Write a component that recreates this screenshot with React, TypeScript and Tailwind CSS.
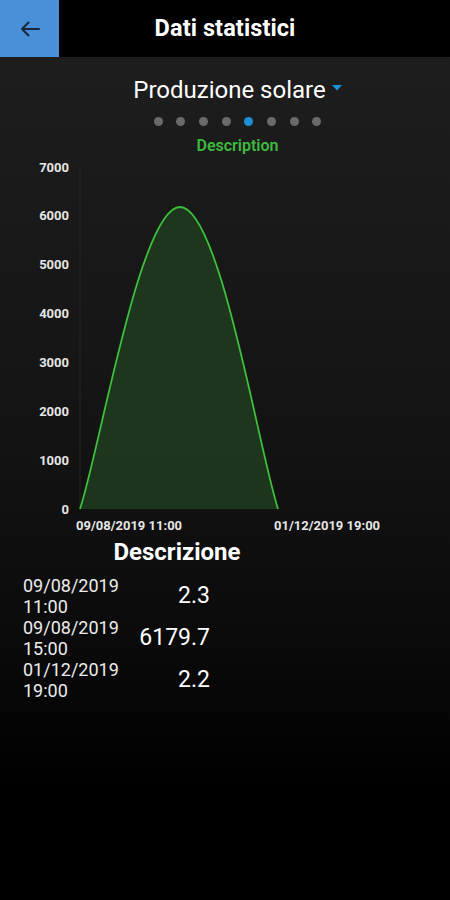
import React from "react";

const yTicks = [7000, 6000, 5000, 4000, 3000, 2000, 1000, 0];
const yOf = (v: number) => 353 - v * 0.048857;

const rows = [
  { d: "09/08/2019", t: "11:00", v: "2.3" },
  { d: "09/08/2019", t: "15:00", v: "6179.7" },
  { d: "01/12/2019", t: "19:00", v: "2.2" },
];

export default function App() {
  return (
    <div
      className="w-[450px] h-[900px] flex flex-col overflow-hidden text-white bg-[linear-gradient(to_bottom,#1f1f1f_0%,#131313_50%,#0a0a0a_72%,#000_87%)]"
      style={{ fontFamily: "Roboto, 'Noto Sans', sans-serif" }}
    >
      <div className="h-[57px] flex bg-black shrink-0">
        <div className="w-[59px] h-[57px] bg-[#4a90d9] flex items-center justify-center">
          <svg width="20" height="16" viewBox="0 0 20 16" fill="none">
            <path d="M19 8H2M8.5 1.5L2 8l6.5 6.5" stroke="#15263a" strokeWidth="2" strokeLinecap="round" strokeLinejoin="round" />
          </svg>
        </div>
        <div className="flex-1 flex items-center justify-center text-[23.5px] font-bold leading-none tracking-[0.1px]">
          Dati statistici
        </div>
        <div className="w-[59px]" />
      </div>

      <div className="pl-[25px] pt-[18px] flex flex-col items-center">
        <div className="flex items-center h-[30px]">
          <span className="text-[24px] leading-[30px]">Produzione solare</span>
          <svg width="10" height="6" viewBox="0 0 10 6" className="ml-[6px] mb-[4px]">
            <path d="M0 0h10L5 5.5z" fill="#1e90d6" />
          </svg>
        </div>
        <div className="mt-[12px] h-[9px] flex gap-[13.7px]">
          {[0, 1, 2, 3, 4, 5, 6, 7].map((i) => (
            <div key={i} className={i === 4 ? "w-[9px] h-[9px] rounded-full bg-[#1e90d6]" : "w-[9px] h-[9px] rounded-full bg-[#6a6a6a]"} />
          ))}
        </div>
        <div className="mt-[10px] text-[16px] leading-[20px] font-semibold text-[#3dba3d]">Description</div>
      </div>

      <svg width="450" height="380" viewBox="0 0 450 380" className="shrink-0">
        <line x1="80" y1={yOf(7000)} x2="80" y2="353" stroke="#242424" strokeWidth="1" />
        <path
          d="M80 353 C100 292.6 140.4 51 180 51 C219.6 51 258.4 292.6 278 353 Z"
          fill="#1d381d"
          fillOpacity="0.95"
        />
        <path
          d="M80 353 C100 292.6 140.4 51 180 51 C219.6 51 258.4 292.6 278 353"
          fill="none"
          stroke="#3cc03c"
          strokeWidth="1.8"
        />
        {yTicks.map((v) => (
          <text
            key={v}
            x="69"
            y={yOf(v) + 4.6}
            textAnchor="end"
            fontSize="13"
            fontWeight="bold"
            fill="#e6e6e6"
            fontFamily="Roboto, sans-serif"
          >
            {v}
          </text>
        ))}
        <text x="76" y="373.5" fontSize="13" fontWeight="bold" fill="#e6e6e6" fontFamily="Roboto, sans-serif">
          09/08/2019 11:00
        </text>
        <text x="274" y="373.5" fontSize="13" fontWeight="bold" fill="#e6e6e6" fontFamily="Roboto, sans-serif">
          01/12/2019 19:00
        </text>
      </svg>

      <div className="mt-[2px] w-[354px] text-center text-[24px] leading-[28px] font-bold">Descrizione</div>

      <div className="mt-[9px] flex flex-col">
        {rows.map((r, i) => (
          <div key={i} className="flex items-center h-[42px]">
            <div className="w-[130px] pl-[23px] text-[18px] leading-[21px] text-[#ececec]">
              <div>{r.d}</div>
              <div>{r.t}</div>
            </div>
            <div className="w-[80px] text-right text-[23px] leading-[28px]">{r.v}</div>
          </div>
        ))}
      </div>
    </div>
  );
}
